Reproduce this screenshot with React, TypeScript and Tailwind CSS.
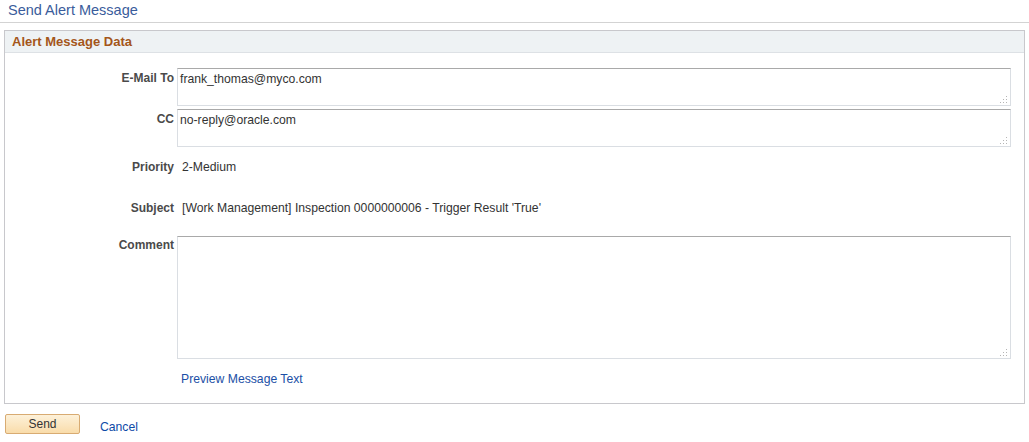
const labelCls =
  "w-[170px] shrink-0 pr-[1px] text-right text-[12px] font-bold leading-[14px] text-[#4a4a4a]";

function Grip() {
  return (
    <svg
      className="pointer-events-none absolute bottom-[2px] right-[3px]"
      width="8"
      height="8"
      viewBox="0 0 8 8"
    >
      <rect x="6" y="0" width="1" height="1" fill="#b5b5b5" />
      <rect x="6" y="3" width="1" height="1" fill="#b5b5b5" />
      <rect x="3" y="3" width="1" height="1" fill="#b5b5b5" />
      <rect x="6" y="6" width="1" height="1" fill="#b5b5b5" />
      <rect x="3" y="6" width="1" height="1" fill="#b5b5b5" />
      <rect x="0" y="6" width="1" height="1" fill="#b5b5b5" />
    </svg>
  );
}

function Box({ value, height }: { value?: string; height: string }) {
  return (
    <div className={`relative w-[834px] ${height}`}>
      <textarea
        readOnly
        defaultValue={value}
        className="block h-full w-full resize-none border border-[#dadee3] border-t-[#a9a9a9] bg-white px-[2px] pt-[3px] text-[12.2px] leading-[14px] text-[#333] outline-none"
      />
      <Grip />
    </div>
  );
}

export default function App() {
  return (
    <div
      className="min-h-screen bg-white text-[#333]"
      style={{ fontFamily: '"Liberation Sans", Arial, sans-serif' }}
    >
      <div className="h-[23px] border-b border-[#d3d3d3] pl-[8px] pt-[2px] text-[14.5px] leading-[16px] text-[#3a5c9b]">
        Send Alert Message
      </div>

      <section className="ml-[4px] mt-[7px] w-[1021px] border border-[#c8c8cc] pb-[17px]">
        <div className="h-[22px] border-b border-[#dde1e5] bg-[#eef2f4] pl-[7px] pt-[3px] text-[13px] font-bold leading-[15px] text-[#a4561a]">
          Alert Message Data
        </div>

        <div className="mt-[15px] flex items-start gap-[2px]">
          <div className={`${labelCls} pt-[3px]`}>E-Mail To</div>
          <Box value="frank_thomas@myco.com" height="h-[38px]" />
        </div>

        <div className="mt-[3px] flex items-start gap-[2px]">
          <div className={`${labelCls} pt-[3px]`}>CC</div>
          <Box value="no-reply@oracle.com" height="h-[38px]" />
        </div>

        <div className="mt-[13px] flex items-start gap-[2px]">
          <div className={labelCls}>Priority</div>
          <div className="pl-[5px] text-[12.2px] leading-[14px]">2-Medium</div>
        </div>

        <div className="mt-[27px] flex items-start gap-[2px]">
          <div className={labelCls}>Subject</div>
          <div className="pl-[5px] text-[12.2px] leading-[14px]">
            [Work Management] Inspection 0000000006 - Trigger Result 'True'
          </div>
        </div>

        <div className="mt-[21px] flex items-start gap-[2px]">
          <div className={`${labelCls} pt-[2px]`}>Comment</div>
          <Box height="h-[123px]" />
        </div>

        <div className="mt-[13px] pl-[176px] text-[12.2px] leading-[14px]">
          <a className="cursor-pointer text-[#1b4fa6]">Preview Message Text</a>
        </div>
      </section>

      <div className="mt-[10px] flex items-start pl-[5px]">
        <button className="h-[20px] w-[75px] rounded-[2px] border border-[#d8ab72] bg-gradient-to-b from-[#fdf1d9] to-[#f9dcaa] text-[12px] leading-[14px] text-[#333]">
          Send
        </button>
        <a className="ml-[20px] mt-[6px] cursor-pointer text-[12.2px] leading-[14px] text-[#0d4aa7]">
          Cancel
        </a>
      </div>
    </div>
  );
}
